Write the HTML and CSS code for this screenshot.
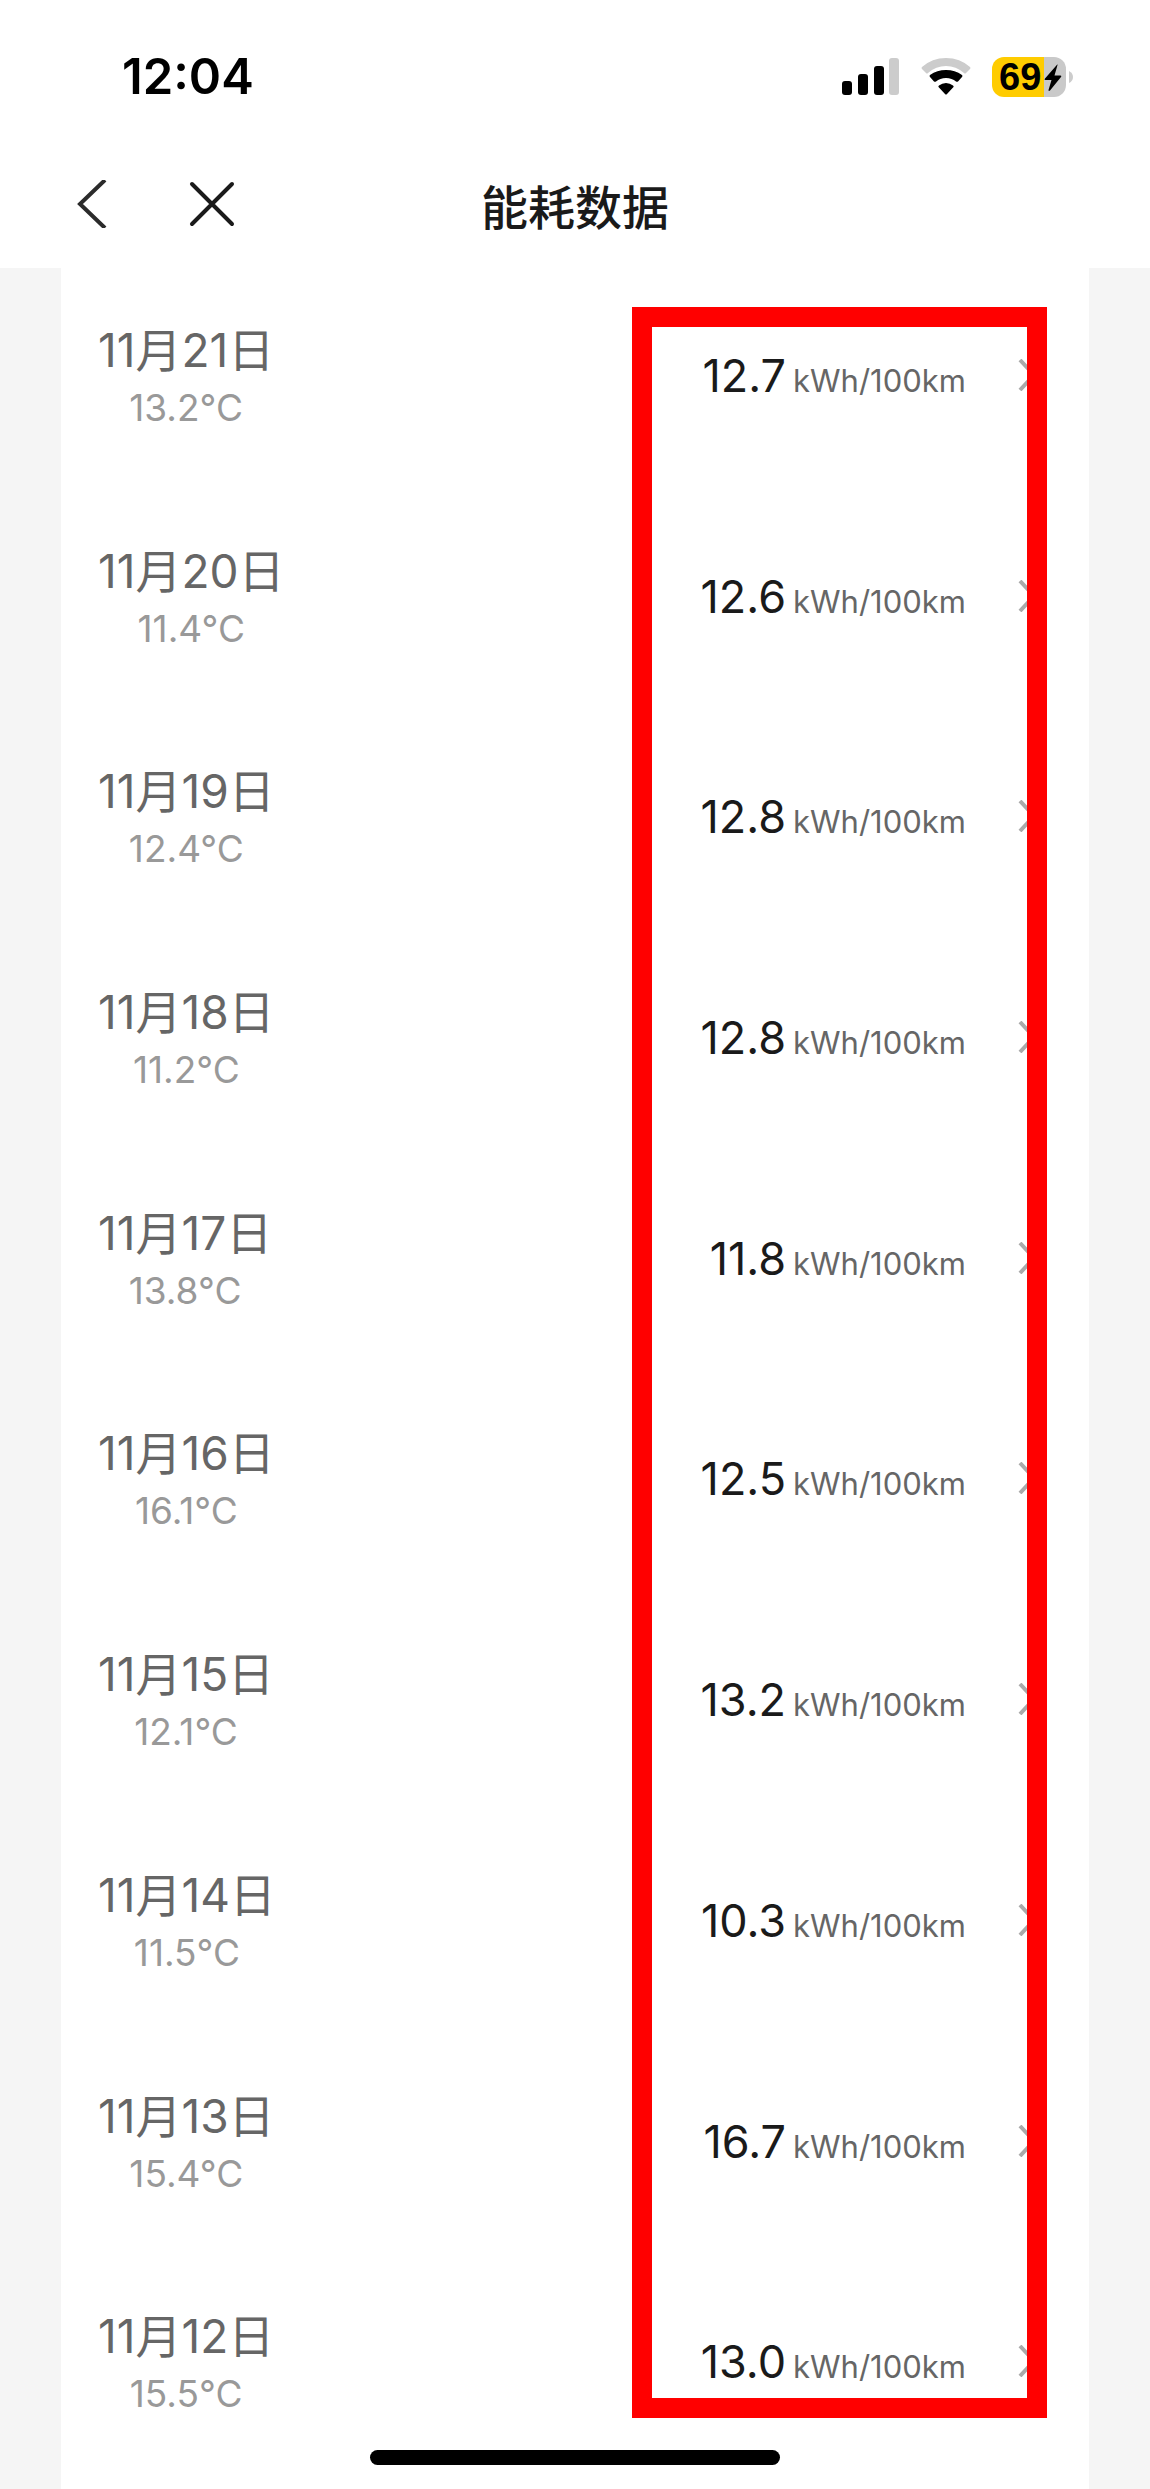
FILE: index.html
```html
<!DOCTYPE html>
<html lang="zh-CN">
<head>
<meta charset="utf-8">
<meta name="viewport" content="width=device-width, initial-scale=1">
<title>能耗数据</title>
<link rel="stylesheet" href="styles.css">
</head>
<body>
<div class="screen">
  <div class="status">
    <time class="clock">12:04</time>
    <div class="indicators">
      <svg class="signal" viewBox="0 0 58 40" aria-hidden="true">
        <rect x="0" y="24" width="10" height="14" rx="3"/>
        <rect x="16" y="17" width="10" height="21" rx="3"/>
        <rect x="32" y="9" width="10" height="29" rx="3"/>
        <rect x="47" y="1" width="10" height="37" rx="3" fill="#ccc"/>
      </svg>
      <svg class="wifi" viewBox="0 0 50 40" aria-hidden="true">
        <path d="M1 12Q0 11 1 10Q11 1 25 1T49 10Q50 11 49 12L45 16Q44 17 43 16Q35 9 25 9T7 16Q6 17 5 16Z" fill="#ccc"/>
        <path d="M9 20Q8 19 9 18Q16 13 25 13T41 18Q42 19 41 20L37 24.500Q36 25 35 24.500Q31 21 25 21T15 24.500Q14 25 13 24.500Z"/>
        <path d="M17.500 30Q17 29 18 28.500Q21 26 25 26T32 28.500Q33 29 32.500 30L26 37Q25 38 24 37Z"/>
      </svg>
      <div class="battery">
        <span class="level">69</span>
        <svg class="bolt" viewBox="0 0 18 28" aria-hidden="true"><path d="M13.500 1Q14 0 13 .8L.8 14.800Q0 16 1.500 16H7.500L4.500 26Q4.500 27.500 6 26.500L17 13Q18 11.500 16.500 11.500H10.500Z"/></svg>
        <svg class="cap" viewBox="0 0 4 12" aria-hidden="true"><path d="M0 0Q4 2 4 6T0 12Z"/></svg>
      </div>
    </div>
  </div>
  <header class="bar">
    <div class="actions">
      <button class="icon" type="button" aria-label="返回"><svg viewBox="0 0 48 48"><path d="M41 0L16 24L41 48" fill="none" stroke="#2b2b2b" stroke-width="4"/></svg></button>
      <button class="icon" type="button" aria-label="关闭"><svg viewBox="0 0 48 48"><path d="M4 4L44 44M44 4L4 44" fill="none" stroke="#1a1a1a" stroke-width="4" stroke-linecap="round"/></svg></button>
    </div>
    <h1 class="title">能耗数据</h1>
  </header>
  <main class="body">
    <ul class="list">
      <li class="row"><div class="day"><span class="date">11月21日</span><span class="temp">13.2°C</span></div><a class="usage" href="#"><span class="value">12.7</span><span class="unit">kWh/100km</span><svg class="chevron" viewBox="0 0 20 32" aria-hidden="true"><path d="M2 1L16 16L2 31"/></svg></a></li>
      <li class="row"><div class="day"><span class="date">11月20日</span><span class="temp">11.4°C</span></div><a class="usage" href="#"><span class="value">12.6</span><span class="unit">kWh/100km</span><svg class="chevron" viewBox="0 0 20 32" aria-hidden="true"><path d="M2 1L16 16L2 31"/></svg></a></li>
      <li class="row"><div class="day"><span class="date">11月19日</span><span class="temp">12.4°C</span></div><a class="usage" href="#"><span class="value">12.8</span><span class="unit">kWh/100km</span><svg class="chevron" viewBox="0 0 20 32" aria-hidden="true"><path d="M2 1L16 16L2 31"/></svg></a></li>
      <li class="row"><div class="day"><span class="date">11月18日</span><span class="temp">11.2°C</span></div><a class="usage" href="#"><span class="value">12.8</span><span class="unit">kWh/100km</span><svg class="chevron" viewBox="0 0 20 32" aria-hidden="true"><path d="M2 1L16 16L2 31"/></svg></a></li>
      <li class="row"><div class="day"><span class="date">11月17日</span><span class="temp">13.8°C</span></div><a class="usage" href="#"><span class="value">11.8</span><span class="unit">kWh/100km</span><svg class="chevron" viewBox="0 0 20 32" aria-hidden="true"><path d="M2 1L16 16L2 31"/></svg></a></li>
      <li class="row"><div class="day"><span class="date">11月16日</span><span class="temp">16.1°C</span></div><a class="usage" href="#"><span class="value">12.5</span><span class="unit">kWh/100km</span><svg class="chevron" viewBox="0 0 20 32" aria-hidden="true"><path d="M2 1L16 16L2 31"/></svg></a></li>
      <li class="row"><div class="day"><span class="date">11月15日</span><span class="temp">12.1°C</span></div><a class="usage" href="#"><span class="value">13.2</span><span class="unit">kWh/100km</span><svg class="chevron" viewBox="0 0 20 32" aria-hidden="true"><path d="M2 1L16 16L2 31"/></svg></a></li>
      <li class="row"><div class="day"><span class="date">11月14日</span><span class="temp">11.5°C</span></div><a class="usage" href="#"><span class="value">10.3</span><span class="unit">kWh/100km</span><svg class="chevron" viewBox="0 0 20 32" aria-hidden="true"><path d="M2 1L16 16L2 31"/></svg></a></li>
      <li class="row"><div class="day"><span class="date">11月13日</span><span class="temp">15.4°C</span></div><a class="usage" href="#"><span class="value">16.7</span><span class="unit">kWh/100km</span><svg class="chevron" viewBox="0 0 20 32" aria-hidden="true"><path d="M2 1L16 16L2 31"/></svg></a></li>
      <li class="row"><div class="day"><span class="date">11月12日</span><span class="temp">15.5°C</span></div><a class="usage" href="#"><span class="value">13.0</span><span class="unit">kWh/100km</span><svg class="chevron" viewBox="0 0 20 32" aria-hidden="true"><path d="M2 1L16 16L2 31"/></svg></a></li>
    </ul>
    <div class="highlight"></div>
    <div class="home"></div>
  </main>
</div>
</body>
</html>
```

FILE: styles.css
```css
* { box-sizing: border-box; }
body {
  margin: 0;
  background: #f5f5f5;
  font-family: Inter, "Noto Sans CJK SC", sans-serif;
  color: #1a1a1a;
}
.screen { display: flex; flex-direction: column; min-height: 100vh; }

/* status bar */
.status {
  display: flex;
  justify-content: space-between;
  align-items: center;
  height: 154px;
  padding: 0 84px 0 122px;
  background: #fff;
  color: #000;
}
.clock { font-size: 49px; font-weight: 600; line-height: 60px; }
.indicators { display: flex; align-items: center; gap: 21px; }
.signal { width: 58px; height: 40px; }
.wifi { width: 50px; height: 40px; }
.battery {
  position: relative;
  display: flex;
  align-items: center;
  width: 74px;
  height: 40px;
  padding-left: 7px;
  border-radius: 12px;
  background: linear-gradient(to right, #fc0 70%, #c9c9c9 70%);
}
.level { font-family: "Liberation Sans", sans-serif; font-size: 38px; font-weight: 700; line-height: 40px; }
.bolt { position: absolute; right: 4px; top: 7px; width: 18px; height: 28px; }
.cap { position: absolute; left: 77px; top: 14px; width: 4px; height: 12px; fill: #ccc; }

/* navigation bar */
.bar {
  display: grid;
  grid-template-columns: 1fr auto 1fr;
  align-items: start;
  height: 114px;
  padding: 18px 64px 0;
  background: #fff;
}
.actions { display: flex; gap: 76px; padding-top: 8px; }
.icon { width: 48px; height: 48px; padding: 0; border: 0; background: none; }
.icon svg { display: block; width: 48px; height: 48px; }
.title { margin: 0; padding-top: 4px; font-size: 47px; font-weight: 500; line-height: 64px; }

/* daily records */
.body { position: relative; display: flex; flex: 1; padding: 0 61px; }
.list {
  display: grid;
  grid-auto-rows: 1fr;
  flex: 1;
  margin: 0;
  padding: 0 51px 14px 37px;
  background: #fff;
  list-style: none;
}
.row { display: flex; justify-content: space-between; align-items: flex-start; padding-top: 52px; min-height: 216px; }
.day { display: flex; flex-direction: column; align-items: center; }
.date { font-size: 46px; line-height: 60px; color: #666; }
.temp { font-size: 37px; line-height: 56px; color: #999; }
.usage { display: flex; align-items: baseline; padding-top: 26px; color: inherit; text-decoration: none; }
.value { font-size: 45px; line-height: 60px; }
.unit { margin-left: 7px; font-size: 31px; line-height: 60px; color: #666; }
.chevron { align-self: flex-start; width: 20px; height: 32px; margin: 13px 0 0 52px; fill: none; stroke: #aaa; stroke-width: 4px; }

/* marker drawn over the consumption column */
.highlight {
  position: absolute;
  top: 39px;
  right: 103px;
  bottom: 71px;
  left: auto;
  width: 415px;
  border: 20px solid #f00;
}
.home {
  position: absolute;
  bottom: 24px;
  left: 50%;
  width: 410px;
  height: 15px;
  margin-left: -205px;
  border-radius: 8px;
  background: #000;
}
```
